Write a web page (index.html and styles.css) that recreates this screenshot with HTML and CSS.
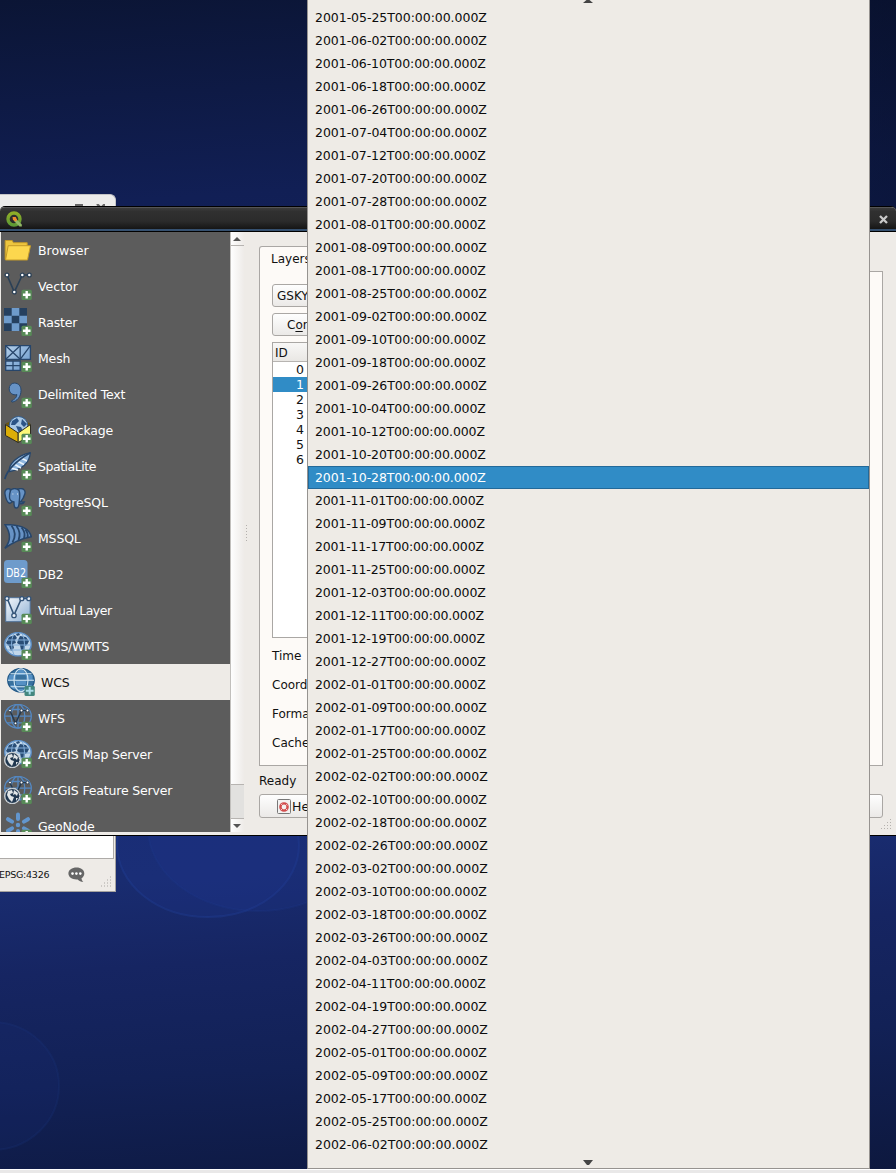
FILE: index.html
```html
<!DOCTYPE html>
<html lang="en">
<head>
<meta charset="utf-8">
<title>Data Source Manager</title>
<link rel="stylesheet" href="styles.css">
</head>
<body>
<div class="desktop">
<svg class="wallpaper" width="896" height="1173" viewBox="0 0 896 1173">
  <ellipse cx="208" cy="845" rx="91" ry="72" class="bubble"/>
  <ellipse cx="258" cy="828" rx="110" ry="83" class="bubble soft"/>
  <ellipse cx="-8" cy="1086" rx="67" ry="64" class="bubble dim"/>
</svg>

<svg width="0" height="0" class="defs">
  <defs>
    <linearGradient id="paper" x1="0" y1="0" x2="1" y2="1"><stop offset="0" stop-color="#f4f7fb"/><stop offset="1" stop-color="#8db0d4"/></linearGradient>
    <linearGradient id="sea" x1="0" y1="0" x2="1" y2="1"><stop offset="0" stop-color="#b4cfe9"/><stop offset="1" stop-color="#6797cb"/></linearGradient>
    <symbol id="plus" viewBox="0 0 28 28"><rect x="17.5" y="17.7" width="10.3" height="10.3" rx="1.5" fill="#578b57"/><path d="M22.7 19v7.6M18.9 22.8h7.6" stroke="#fff" stroke-width="2.4"/></symbol>
    <symbol id="grid-globe" viewBox="0 0 28 28"><g fill="none" stroke="#5488c2" stroke-width="1.3"><ellipse cx="14" cy="12.2" rx="13.3" ry="11.8"/><ellipse cx="14" cy="12.2" rx="6.8" ry="11.8"/><path d="M14 .4v23.6M.7 12.2h26.6M3 5.5h22M3 18.8h22"/></g></symbol>
    <symbol id="map-globe" viewBox="0 0 28 28"><ellipse cx="14" cy="12.2" rx="13.2" ry="11.7" fill="#c1d7eb" stroke="#5b8fc8" stroke-width="1.4"/><path d="M5 5l6-2 2 3-2 2 1 3-3 1 1 4-3 3-2-5-3-3zM16 4l6 1 3 4-2 4-2 1-1 5-3-1-1-5-3-2 1-3zM12 2l3-1 1 2-3 1z" fill="#294d76"/><path d="M2 8h24M1 13h26M3 18h22M10 1q-5 11 0 22M18 1q5 11 0 22" fill="none" stroke="#82add8" stroke-width="1"/></symbol>
    <symbol id="arc" viewBox="0 0 28 28"><circle cx="8.3" cy="20" r="7.6" fill="#213850" stroke="#e1e5e7" stroke-width="1.3"/><path d="M4 15l4-1 1 3-3 1 1 2 3 1-2 5-3-3-2-4zM10 14l4 3-1 3-2-2-2 1zM12 22l2 0-2 3z" fill="#e1e5e7"/><circle cx="8.3" cy="20" r="7.2" fill="none" stroke="#617181" stroke-width=".7" stroke-dasharray="1 1"/></symbol>
    <symbol id="nodes" viewBox="0 0 28 28"><path d="M6 6.5l5.5 12.8L17.5 6.5h6" fill="none" stroke="#26394d" stroke-width="1.5"/><g fill="#fff" stroke="#26394d" stroke-width=".9"><circle cx="6" cy="6.5" r="1.4"/><circle cx="11.5" cy="19.3" r="1.4"/><circle cx="17.5" cy="6.5" r="1.4"/><circle cx="23.5" cy="6.5" r="1.4"/></g></symbol>
  </defs>
</svg>

<section class="backwin backwin-top">
  <svg width="30" height="8" viewBox="0 0 30 8"><path d="M0 1.5h8" stroke="#666" stroke-width="3"/><path d="M22 0l3 3 2 3M30 0l-3 3-2 3" stroke="#666" stroke-width="2.4" fill="none"/></svg>
</section>
<section class="backwin backwin-bottom">
  <div class="canvas"></div>
  <div class="status">
    <span>EPSG:4326</span>
    <svg class="chat" width="17" height="16" viewBox="0 0 17 16"><path d="M8.5.5C13 .5 16.3 3 16.3 6.5c0 2.2-1.2 3.8-2.8 4.8.1 1.300 .8 2.700 1.800 3.700-2.300-.2-4.300-1-5.600-2.600C4.500 12.900.4 10.200.4 6.500.4 3 4 .5 8.500.5z" fill="#666"/><g fill="#fff"><circle cx="4.500" cy="6.600" r="1.300"/><circle cx="8.400" cy="6.600" r="1.300"/><circle cx="12.300" cy="6.600" r="1.300"/></g></svg>
    <svg class="grip" width="11" height="12" viewBox="0 0 11 12"><path d="M9 1h1M6 4h1M9 4h1M3 7h1M6 7h1M9 7h1M0 10h1M3 10h1M6 10h1M9 10h1" stroke="#aaa7a3" stroke-width="1"/></svg>
  </div>
</section>

<section class="dialog">
  <header class="titlebar">
    <svg width="17" height="17" viewBox="0 0 17 17"><defs><linearGradient id="q" x1="0" y1="0" x2="0" y2="1"><stop offset="0" stop-color="#8fad27"/><stop offset="1" stop-color="#5e9b35"/></linearGradient></defs><circle cx="8" cy="8" r="6" fill="none" stroke="url(#q)" stroke-width="3.400"/><path d="M8 8l2.500.3 5.300 5.200v2h-2.300L8.500 10.500z" fill="#93b968"/><path d="M6.500 6h3.200l1.500 3-1.600 1.400L7 9z" fill="#ef8b2c"/></svg>
    <svg class="close" width="9" height="9" viewBox="0 0 9 9"><path d="M1 1l7 7M8 1l-7 7" stroke="#c9c9c9" stroke-width="2.300"/></svg>
  </header>
  <div class="body">
    <nav class="sources">
      <a class="source wide"><svg class="icon" viewBox="0 0 28 28"><path d="M1.200 23.500V4.500h7l1.200 2.200h13.800V23z" fill="#eec63f" stroke="#c49a28"/><path d="M4.200 9.700h22.300L23.500 24H1.500z" fill="#fcd74e" stroke="#c49a28"/></svg>Browser</a>
      <a class="source wide"><svg class="icon" viewBox="0 0 28 28"><path d="M3 3l7.300 17L18.300 3h7" fill="none" stroke="#2b4056" stroke-width="1.700"/><g fill="#fff" stroke="#2b4056" stroke-width="1.300"><circle cx="3" cy="3" r="1.900"/><circle cx="10.300" cy="20" r="1.900"/><circle cx="18.300" cy="3" r="1.900"/><circle cx="25.300" cy="3" r="1.900"/></g><use href="#plus"/></svg>Vector</a>
      <a class="source"><svg class="icon" viewBox="0 0 28 28"><path d="M0 0h23v23H0z" fill="#6e9bcb"/><path d="M0 0h7.700v7.700H0zM15.300 0H23v7.700h-7.700zM7.700 7.700h7.600v7.600H7.700zM0 15.300h7.700V23H0zM15.300 15.300H23V23h-7.700z" fill="#25405f"/><use href="#plus"/></svg>Raster</a>
      <a class="source"><svg class="icon" viewBox="0 0 28 28"><g stroke="#27466b" stroke-width="1.300"><path d="M1.700 1.700h14.500v13.600H1.700zM16.200 1.700h10.200v13.600H16.200zM1.700 17h14.500v9.300H1.700z" fill="url(#sea)"/><path d="M1.700 1.700l14.500 13.600M16.200 1.700L1.700 15.300M26.400 1.700L16.200 15.300M9 17v9.300M1.700 21.700h14.500" fill="none"/></g><use href="#plus"/></svg>Mesh</a>
      <a class="source"><svg class="icon" viewBox="0 0 28 28"><path d="M10.300 3.100c4.200 0 6.700 2.900 6.700 7.300 0 6.500-4 10.800-9 11.700l-.6-1.200c3.400-1.400 5.400-3.700 5.500-6.300-4 1.100-7.700-1.800-7.700-5.800 0-3.200 2.100-5.700 5.100-5.700z" fill="#6793c6" stroke="#27466b"/><use href="#plus"/></svg>Delimited Text</a>
      <a class="source"><svg class="icon" viewBox="0 0 28 28"><path d="M1.500 7.500L14 2l12.500 5.500-12.500 8z" fill="#6b5511"/><circle cx="14.500" cy="9.800" r="9.300" fill="#a9c8e5" stroke="#315d8e"/><path d="M8 5l5-3 2 3-4 4-4 0zM18 3l5 5-3 3-3-3zM12 10l5 1 2 4-4 2z" fill="#2b5487"/><path d="M1.500 8.500L14.200 17v9.500L1.500 19.500z" fill="#dcae08" stroke="#2e2c20"/><path d="M14.200 17L26.500 8.500v11l-12.300 7z" fill="#fdf778" stroke="#2e2c20"/><use href="#plus"/></svg>GeoPackage</a>
      <a class="source tight"><svg class="icon" viewBox="0 0 28 28"><path d="M26.300.8C25.500 10 20.500 17 5.500 19.500 4 13 13 3 26.300.8z" fill="#8eb6df" stroke="#27466b" stroke-width="1.300"/><path d="M10 12l7 4M13 9l7 3.500M17 6l6 3M7 16l7 2" stroke="#eaf3fb" stroke-width="1.500"/><path d="M.8 27C3 19 12 9 26.300.8" fill="none" stroke="#27466b" stroke-width="1.800"/><use href="#plus"/></svg>SpatiaLite</a>
      <a class="source"><svg class="icon" viewBox="0 0 28 28"><g fill="#6793c6" stroke="#27466b" stroke-width="1.400"><path d="M6 1c-4-1-5.500 2-5 5s2 8 4 9 4-2 4-4zM14 1c5-1.500 8 1 6.800 5-.8 3.500-2.600 6-4.300 8h3.800c-1 2-3 2-4.600 1.500z"/><path d="M6.500 2.500C8 0 13 0 15 2.500c1.500 4 .5 8 .2 11.500-.2 4-1 6-2.700 6s-2.700-1-2.500-6c-3-.5-4.500-2-4.500-5s.2-4 1-6.500z"/></g><path d="M8.500 6h.8M13.200 6h.8" stroke="#fff"/><use href="#plus"/></svg>PostgreSQL</a>
      <a class="source"><svg class="icon" viewBox="0 0 28 28"><path d="M1 .6c8 0 15 .8 20 3.800 3.500 2 5.500 5.300 6.300 8.300C18 14.500 9 18 .8 24.300 7.500 16.500 6.500 8.500 1 .6z" fill="#6793c6" stroke="#27466b" stroke-width="1.500"/><path d="M7.500 1.500q6 8 1 17M12.500 2q5 7 2 14M17.500 3.500q4.500 5 2.500 11M21.500 5.500q3 4 2 8" fill="none" stroke="#27466b" stroke-width="1.800"/><use href="#plus"/></svg>MSSQL</a>
      <a class="source"><svg class="icon" viewBox="0 0 28 28"><rect width="23.500" height="23" rx="3.500" fill="#6e9bcb"/><text x="2" y="16.500" class="db2" textLength="20" lengthAdjust="spacingAndGlyphs">DB2</text><use href="#plus"/></svg>DB2</a>
      <a class="source tight"><svg class="icon" viewBox="0 0 28 28"><path d="M1.700 1.700h24.500v24H1.700z" fill="url(#paper)" stroke="#4f7097"/><path d="M3 2l7 17L17.500 2.500H26" fill="none" stroke="#345478" stroke-width="1.600"/><g fill="#e8eef5" stroke="#345478" stroke-width="1.300"><circle cx="3" cy="2.500" r="2"/><circle cx="10" cy="19.500" r="2.200"/><circle cx="17.800" cy="2.700" r="2"/><circle cx="24.800" cy="2.700" r="2"/></g><use href="#plus"/></svg>Virtual Layer</a>
      <a class="source slim"><svg class="icon" viewBox="0 0 28 28"><use href="#map-globe"/><use href="#plus"/></svg>WMS/WMTS</a>
      <a class="source current"><svg class="icon" viewBox="0 0 28 28"><ellipse cx="14" cy="12.200" rx="13.200" ry="11.700" fill="#38719e" stroke="#255a88" stroke-width="1.400"/><path d="M14 .7C7 3 7 21 14 23.700 21 21 21 3 14 .7M2.500 7l23 0v5H1zM3 17h22l-3 4H6z" fill="#5590c4"/><g fill="none" stroke="#d4e8f4" stroke-width="1.100"><ellipse cx="14" cy="12.200" rx="7" ry="11.500"/><path d="M1 12.200h26M3.500 5.700h21M3.500 18.700h21"/></g><rect x="17.500" y="17.700" width="10.300" height="10.300" rx="1.500" fill="#43877f"/><path d="M22.700 19v7.600M18.900 22.800h7.600" stroke="#a9dce8" stroke-width="2"/></svg>WCS</a>
      <a class="source"><svg class="icon" viewBox="0 0 28 28"><use href="#grid-globe"/><use href="#nodes"/><use href="#plus"/></svg>WFS</a>
      <a class="source"><svg class="icon" viewBox="0 0 28 28"><use href="#map-globe"/><use href="#arc"/><use href="#plus"/></svg>ArcGIS Map Server</a>
      <a class="source"><svg class="icon" viewBox="0 0 28 28"><use href="#grid-globe"/><use href="#nodes"/><use href="#arc"/><use href="#plus"/></svg>ArcGIS Feature Server</a>
      <a class="source"><svg class="icon" viewBox="0 0 28 28"><g stroke="#6296ce" stroke-width="4" stroke-linecap="round"><path d="M14 2.500v4.500M14 19v5M4 7.200l4 2.400M24 7.200l-4 2.400M4 18.800l4-2.400M24 18.800l-4-2.400"/></g><circle cx="14" cy="13" r="2.200" fill="#6296ce"/><use href="#plus"/></svg>GeoNode</a>
    </nav>
    <div class="scrollbar">
      <div class="sb-btn"><svg width="8" height="4" viewBox="0 0 8 4"><path d="M0 4L4 0l4 4z" fill="#555"/></svg></div>
      <div class="sb-thumb"></div>
      <div class="sb-track"></div>
      <div class="sb-btn down"><svg width="8" height="4" viewBox="0 0 8 4"><path d="M0 0h8L4 4z" fill="#555"/></svg></div>
    </div>
    <div class="splitter"></div>
    <main class="page">
      <div class="tabs"><div class="tab">Layers</div></div>
      <div class="pane">
        <div class="control combo">GSKY</div>
        <div class="control connect"><span>C<u>o</u>n</span></div>
        <div class="table">
          <div class="thead">ID</div>
          <div class="tr">0</div><div class="tr sel">1</div><div class="tr">2</div><div class="tr">3</div><div class="tr">4</div><div class="tr">5</div><div class="tr">6</div>
        </div>
        <div class="field">Time</div><div class="field">Coord</div><div class="field">Forma</div><div class="field">Cache</div>
      </div>
      <div class="ready">Ready</div>
      <div class="buttons">
        <div class="control help"><svg width="14" height="15" viewBox="0 0 14 15"><rect x=".5" y=".5" width="13" height="14" rx="1" fill="#f3f2f1" stroke="#777"/><circle cx="7" cy="8" r="3.600" fill="none" stroke="#d24c4c" stroke-width="2.400"/><circle cx="7" cy="8" r="3.600" fill="none" stroke="#fff" stroke-width="1" stroke-dasharray="1.400 4.250" stroke-dashoffset="-2"/></svg>He</div>
        <div class="control"></div>
      </div>
      <svg class="size-grip" width="11" height="11" viewBox="0 0 11 11"><path d="M9 .5h1M6 3.500h1M9 3.500h1M3 6.500h1M6 6.500h1M9 6.500h1M0 9.500h1M3 9.500h1M6 9.500h1M9 9.500h1" stroke="#b5b2ae"/></svg>
    </main>
  </div>
</section>

<div class="menu">
  <svg class="scroll-up" width="10" height="4" viewBox="0 0 10 4"><path d="M0 3L3.500 0h3L10 3z" fill="#444"/></svg>
  <ul class="times">
    <li class="n1">2001-05-25T00:00:00.000Z</li>
    <li class="n1">2001-06-02T00:00:00.000Z</li>
    <li class="n2">2001-06-10T00:00:00.000Z</li>
    <li class="n2">2001-06-18T00:00:00.000Z</li>
    <li class="n1">2001-06-26T00:00:00.000Z</li>
    <li class="n1">2001-07-04T00:00:00.000Z</li>
    <li class="n2">2001-07-12T00:00:00.000Z</li>
    <li class="n1">2001-07-20T00:00:00.000Z</li>
    <li class="n1">2001-07-28T00:00:00.000Z</li>
    <li class="n2">2001-08-01T00:00:00.000Z</li>
    <li class="n1">2001-08-09T00:00:00.000Z</li>
    <li class="n2">2001-08-17T00:00:00.000Z</li>
    <li class="n1">2001-08-25T00:00:00.000Z</li>
    <li class="n1">2001-09-02T00:00:00.000Z</li>
    <li class="n2">2001-09-10T00:00:00.000Z</li>
    <li class="n2">2001-09-18T00:00:00.000Z</li>
    <li class="n1">2001-09-26T00:00:00.000Z</li>
    <li class="n2">2001-10-04T00:00:00.000Z</li>
    <li class="n3">2001-10-12T00:00:00.000Z</li>
    <li class="n2">2001-10-20T00:00:00.000Z</li>
    <li class="n2 active">2001-10-28T00:00:00.000Z</li>
    <li class="n4">2001-11-01T00:00:00.000Z</li>
    <li class="n3">2001-11-09T00:00:00.000Z</li>
    <li class="n4">2001-11-17T00:00:00.000Z</li>
    <li class="n3">2001-11-25T00:00:00.000Z</li>
    <li class="n2">2001-12-03T00:00:00.000Z</li>
    <li class="n4">2001-12-11T00:00:00.000Z</li>
    <li class="n3">2001-12-19T00:00:00.000Z</li>
    <li class="n2">2001-12-27T00:00:00.000Z</li>
    <li class="n2">2002-01-01T00:00:00.000Z</li>
    <li class="n1">2002-01-09T00:00:00.000Z</li>
    <li class="n2">2002-01-17T00:00:00.000Z</li>
    <li class="n1">2002-01-25T00:00:00.000Z</li>
    <li>2002-02-02T00:00:00.000Z</li>
    <li class="n1">2002-02-10T00:00:00.000Z</li>
    <li class="n1">2002-02-18T00:00:00.000Z</li>
    <li>2002-02-26T00:00:00.000Z</li>
    <li>2002-03-02T00:00:00.000Z</li>
    <li class="n1">2002-03-10T00:00:00.000Z</li>
    <li class="n1">2002-03-18T00:00:00.000Z</li>
    <li>2002-03-26T00:00:00.000Z</li>
    <li>2002-04-03T00:00:00.000Z</li>
    <li class="n2">2002-04-11T00:00:00.000Z</li>
    <li class="n1">2002-04-19T00:00:00.000Z</li>
    <li>2002-04-27T00:00:00.000Z</li>
    <li class="n1">2002-05-01T00:00:00.000Z</li>
    <li>2002-05-09T00:00:00.000Z</li>
    <li class="n1">2002-05-17T00:00:00.000Z</li>
    <li>2002-05-25T00:00:00.000Z</li>
    <li>2002-06-02T00:00:00.000Z</li>
  </ul>
  <svg class="scroll-down" width="10" height="5" viewBox="0 0 10 5"><path d="M0 0h10L6 5H4z" fill="#444"/></svg>
</div>
<div class="taskbar"></div>
</div>
</body>
</html>
```
FILE: styles.css
```css
* { box-sizing: border-box; }
body { margin: 0; font: 12.5px/15px "DejaVu Sans", sans-serif; color: #111; }
svg { display: block; flex: none; }
.desktop {
  position: relative; width: 896px; height: 1173px; overflow: hidden;
  background:
    linear-gradient(90deg, rgba(4, 10, 28, 0) 45%, rgba(4, 10, 28, .45) 100%) 0 0 / 896px 230px no-repeat,
    linear-gradient(176deg, #0b1535 0%, #111f55 17%, #17286a 45%, #192c70 72%, #162562 79%, #122156 88%, #0d183e 100%);
}
.wallpaper { position: absolute; left: 0; top: 0; }
.defs { position: absolute; }
.bubble { fill: rgba(30, 56, 145, .22); stroke: rgba(34, 66, 155, .35); stroke-width: 2; }
.bubble.soft { stroke: rgba(34, 66, 155, .15); }
.bubble.dim { fill: rgba(24, 46, 120, .2); stroke: rgba(30, 58, 135, .2); }

.backwin { position: absolute; left: 0; width: 116px; background: #eeebe7; }
.backwin-top { top: 194px; height: 20px; background: #ececeb; border: solid #c4c4c6; border-width: 1px 1px 0 0; border-radius: 0 6px 0 0; padding: 9px 0 0 75px; }
.backwin-bottom { top: 836px; height: 56px; border: solid #a5a29f; border-width: 0 1px 1px 0; }
.canvas { height: 23px; width: 114px; background: #fff; border: solid #aeaba8; border-width: 0 1px 1px 0; }
.status { display: flex; align-items: center; height: 31px; font-size: 9.500px; letter-spacing: -.25px; padding-right: 3px; }
.status span { width: 68px; margin-left: -1px; }
.status .chat { margin-left: 1px; }
.grip { margin: 14px 0 0 auto; }

.dialog { position: absolute; left: 0; top: 206px; width: 896px; height: 630px; background: #eeebe7; border: solid #000; border-width: 1px 0; border-radius: 5px 5px 0 0; overflow: hidden; }
.titlebar { height: 25px; display: flex; align-items: center; justify-content: space-between; padding: 0 8px 1px 6px; background: linear-gradient(#3b3b3b, #303030 15%, #2b2b2b 55%, #151515 88%, #35506f 89%, #35506f 95%, #000 96%); border-top: 1px solid #555; }
.body { display: flex; height: 604px; padding-left: 1px; }
.sources { width: 229px; height: 600px; background: #5c5c5c; overflow: hidden; flex: none; }
.source { display: flex; align-items: center; height: 36px; padding-left: 3px; color: #fff; gap: 6px; letter-spacing: -.17px; }
.source.wide { letter-spacing: 0; }
.source.slim { letter-spacing: -.35px; }
.source.tight { letter-spacing: -.46px; }
.source.current { background: #eeebe7; color: #111; padding-left: 6px; }
.icon { width: 28px; height: 28px; }
.db2 { font: 13px "DejaVu Sans", sans-serif; letter-spacing: 0; fill: #fff; }
.scrollbar { width: 14px; height: 600px; display: flex; flex-direction: column; border-left: 1px solid #c1bfbc; flex: none; background: linear-gradient(90deg, #fefefe, #eeebe8); }
.sb-btn { height: 14px; display: flex; align-items: center; justify-content: center; border-bottom: 1px solid #b7b4b1; padding-right: 1px; }
.sb-btn.down { border: 0; height: 13px; }
.sb-thumb { flex: 1; }
.sb-track { height: 35px; background: #e2e1df; border: solid #b7b4b1; border-width: 1px 0; }
.splitter { width: 15px; height: 17px; margin-top: 293px; flex: none; background: repeating-linear-gradient(#b3b0ad 0 1px, transparent 1px 3px) 2px 0 / 1px 17px no-repeat; }
.page { width: 624px; padding-top: 14px; position: relative; }
.tabs { display: flex; height: 26px; position: relative; }
.tab { width: 60px; height: 26px; padding: 5px 0 0 11px; font-size: 12px; background: #fdfaf7; border: 1px solid #aaa7a4; border-bottom: 0; border-radius: 3px 3px 0 0; position: relative; }
.pane { height: 495px; margin-top: -1px; background: #fdfaf7; border: 1px solid #aaa7a4; padding: 12px; }
.tabs { z-index: 1; }
.control { border: 1px solid #aaa7a4; border-radius: 3px; background: linear-gradient(#fefefe, #ebe9e7); display: flex; align-items: center; }
.combo { height: 23px; padding: 1px 0 0 4px; font-size: 12px; }
.connect { height: 23px; margin: 6px 0; padding: 1px 0 0 14px; width: 100px; font-size: 12px; }
.connect u { text-underline-offset: 2px; }
.table { height: 296px; background: #fff; border: 1px solid #aaa7a4; margin-bottom: 4px; }
.thead { height: 19px; padding: 3px 0 0 2px; font-size: 12px; border-bottom: 1px solid #b7b4b1; background: linear-gradient(#f8f7f6, #e9e7e4); }
.tr { height: 15px; padding-left: 23px; }
.tr.sel { background: #308cc6; color: #fff; }
.field { height: 29px; line-height: 29px; font-size: 12px; }
.ready { height: 28px; line-height: 31px; font-size: 12px; }
.buttons { display: flex; justify-content: space-between; }
.buttons .control { width: 90px; height: 24px; }
.buttons .help { padding-left: 17px; gap: 1px; }
.size-grip { position: absolute; right: -9px; top: 587px; }

.menu { position: absolute; z-index: 2; left: 307px; top: -1px; width: 563px; height: 1170px; background: #eeebe6; border: 1px solid #969390; }
.times { list-style: none; margin: 0; padding: 2px 0 0; }
.times li { height: 23px; line-height: 24px; padding-left: 7px; color: #0c0c0c; }
.times .n1 { letter-spacing: -.042px; }
.times .n2 { letter-spacing: -.083px; }
.times .n3 { letter-spacing: -.125px; }
.times .n4 { letter-spacing: -.167px; }
.times .active { background: #308cc6; color: #fff; box-shadow: inset 0 0 0 1px #226999; }
.scroll-up { margin-left: 275px; }
.scroll-down { margin: 4px 0 0 275px; }
.taskbar { position: absolute; left: 0; top: 1169px; width: 896px; height: 4px; background: #e9e8e8; border-top: 1px solid #fff; }
```
